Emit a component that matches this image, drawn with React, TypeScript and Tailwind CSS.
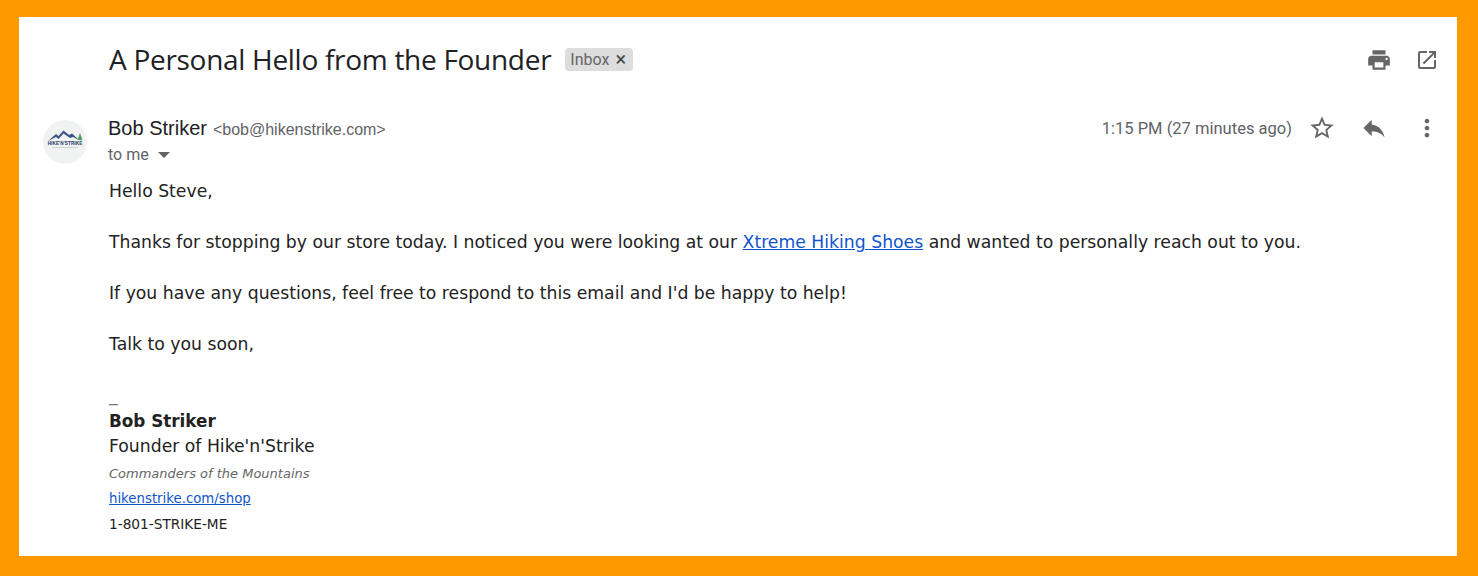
import { MdMoreVert, MdOpenInNew, MdPrint, MdReply, MdStarBorder } from "react-icons/md";

const bodyFont = "font-['DejaVu_Sans',sans-serif]";

const Logo = () => (
  <div className="w-11 h-11 rounded-full bg-[#f1f2f2] flex items-center justify-center">
    <svg viewBox="0 0 44 44" className="w-11 h-11">
      <path d="M5 21 L13 14 L15.5 16 L20.5 10.5 L26 15 L29 13.5 L36 20 L30 17 L27 18 L20.5 13.5 L15.5 19 L13 17 Z" fill="#3d5488" />
      <path d="M34.5 20 L37 13 L39.5 20 Z" fill="#4d9a63" />
      <text x="22" y="24.5" textAnchor="middle" fontSize="4.6" fontWeight="900" fill="#24365f" fontFamily="Liberation Sans, sans-serif" letterSpacing="0.1">
        HIKE'N'STRIKE
      </text>
      <rect x="9" y="27" width="26" height="0.7" fill="#b9d0c0" />
    </svg>
  </div>
);

const App = () => {
  return (
    <div className="w-[1478px] h-[576px] bg-[#ff9900] pl-[19px] pr-[21px] pt-[17px] pb-[20px] overflow-hidden">
      <div className="h-full bg-white flex flex-col font-['Roboto',sans-serif]">
        <div className="flex items-center h-[85px] pl-[90px] pr-[16px]">
          <h1 className="text-[28px] leading-9 text-[#202124] font-['Open_Sans',sans-serif] tracking-[-0.29px] -mt-[1px]">
            A Personal Hello from the Founder
          </h1>
          <span className="ml-[14px] -mt-[1px] h-[23px] pl-[5px] pr-[7px] flex items-center gap-[6px] rounded-[4px] bg-[#dddddd] text-[#666666] text-base">
            <span className="mt-[1px]">Inbox</span>
            <span className="text-[#444444] text-[20px] leading-none">×</span>
          </span>
          <div className="ml-auto flex items-center gap-[23px] text-[#666666] pr-[2px]">
            <MdPrint className="w-[26px] h-[26px]" />
            <MdOpenInNew className="w-[24px] h-[24px]" />
          </div>
        </div>

        <div className="flex pl-[24px]">
          <div className="pt-[18px] w-[65px] shrink-0">
            <Logo />
          </div>
          <div className="flex-1 min-w-0">
            <div className="flex items-start pr-[16px] pt-[13px]">
              <div className="flex-1">
                <div className="h-[26px] flex items-baseline">
                  <span className="text-[20px] leading-[26px] text-[#202124] font-['Liberation_Sans',sans-serif]">Bob Striker</span>
                  <span className="ml-[6px] text-base text-[#5f6368] font-['Liberation_Sans',sans-serif]">
                    {"<bob@hikenstrike.com>"}
                  </span>
                </div>
                <div className="h-[26px] mt-[1px] flex items-center text-base text-[#5f6368]">
                  to me
                  <span className="ml-[9px] w-0 h-0 border-x-[6px] border-x-transparent border-t-[6px] border-t-[#5f6368]" />
                </div>
              </div>
              <div className="flex items-center h-[24px] mt-[1px] text-[#666666]">
                <span className="text-[16.55px] text-[#5f6368] mr-[16px] mt-[2px]">1:15 PM (27 minutes ago)</span>
                <MdStarBorder className="w-7 h-7" />
                <MdReply className="w-7 h-7 ml-[24px]" />
                <MdMoreVert className="w-7 h-7 ml-[25px]" />
              </div>
            </div>

            <div className={`${bodyFont} text-[17.24px] leading-[25.5px] text-[#222222] mt-[11px] pl-[1px]`}>
              <p>Hello Steve,</p>
              <p className="mt-[25.5px]">
                Thanks for stopping by our store today. I noticed you were looking at our{" "}
                <a className="text-[#1155cc] underline">Xtreme Hiking Shoes</a> and wanted to personally reach out to you.
              </p>
              <p className="mt-[25.5px]">If you have any questions, feel free to respond to this email and I'd be happy to help!</p>
              <p className="mt-[25.5px]">Talk to you soon,</p>
              <div className="mt-[25px] h-[25.5px] text-[#777777] leading-[25.5px]">_</div>
              <p className="font-bold text-[16.8px] mt-[1px]">Bob Striker</p>
              <p className="-mt-[0.5px]">Founder of Hike'n'Strike</p>
              <p className="text-[13px] italic text-[#666666] mt-[1px]">Commanders of the Mountains</p>
              <p className="text-[13.3px]">
                <a className="text-[#1155cc] underline">hikenstrike.com/shop</a>
              </p>
              <p className="text-[13.7px] mt-[0.5px]">1-801-STRIKE-ME</p>
            </div>
          </div>
        </div>
      </div>
    </div>
  );
};

export default App;
